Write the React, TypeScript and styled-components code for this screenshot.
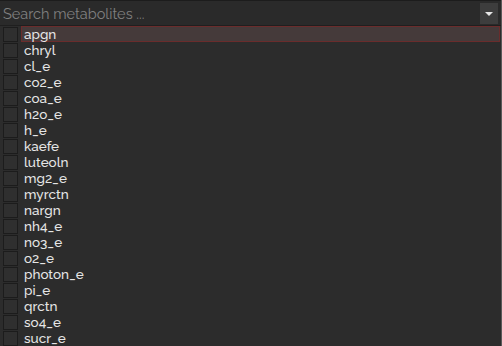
import React from 'react'
import styled, { createGlobalStyle } from 'styled-components'

const GlobalStyle = createGlobalStyle`
html, body {
  margin: 0;
  padding: 0;
  background: #2c2c2c;
  overflow: hidden;
}
`

const metabolites = [
  'apgn', 'chryl', 'cl_e', 'co2_e', 'coa_e', 'h2o_e', 'h_e', 'kaefe', 'luteoln', 'mg2_e',
  'myrctn', 'nargn', 'nh4_e', 'no3_e', 'o2_e', 'photon_e', 'pi_e', 'qrctn', 'so4_e', 'sucr_e',
]

const Panel = styled.div`
width: 502px;
height: 346px;
background: #2c2c2c;
font-family: Raleway, "Open Sans", "Noto Sans", sans-serif;
border-right: 1px solid #5a5a5a;
box-sizing: border-box;
display: flex;
flex-direction: column;
`

const SearchBar = styled.div`
height: 26px;
box-sizing: border-box;
border-top: 1px solid #1c1c1c;
border-bottom: 1px solid #1f1f1f;
background: #2a2a2a;
display: flex;
align-items: center;
padding: 0 3px 0 3px;
`

const SearchInput = styled.input`
flex: 1;
min-width: 0;
background: transparent;
border: none;
outline: none;
color: #ddd;
font-family: inherit;
font-size: 14.5px;
padding: 0;

&::placeholder {
  color: #808080;
}
`

const DropButton = styled.div`
width: 18px;
height: 21px;
background: #3d3d3d;
display: flex;
align-items: center;
justify-content: center;
`

const Triangle = styled.div`
width: 0;
height: 0;
border-left: 4px solid transparent;
border-right: 4px solid transparent;
border-top: 4px solid #e6e6e6;
margin-top: 1px;
`

const List = styled.div`
display: flex;
flex-direction: column;
`

const Row = styled.div`
height: 16px;
display: flex;
align-items: center;
gap: 3px;
padding-left: 3px;
`

const Check = styled.div`
width: 13px;
height: 13px;
flex: none;
border: 1px solid #1c1c1c;
background: #2f2f2f;
`

const Label = styled.div<{ $active?: boolean }>`
flex: 1;
height: 16px;
box-sizing: border-box;
display: flex;
align-items: center;
padding-left: 2px;
font-size: 13.5px;
font-weight: 500;
color: #e6e6e6;
border: 1px solid ${p => (p.$active ? '#6a2c2c' : 'transparent')};
background: ${p => (p.$active ? '#453a3a' : 'transparent')};
margin-right: 1px;
`

export default function App() {
  return (
    <>
      <GlobalStyle />
      <Panel>
        <SearchBar>
          <SearchInput placeholder="Search metabolites ..." />
          <DropButton>
            <Triangle />
          </DropButton>
        </SearchBar>
        <List>
          {metabolites.map((m, i) => (
            <Row key={m}>
              <Check />
              <Label $active={i === 0}>{m}</Label>
            </Row>
          ))}
        </List>
      </Panel>
    </>
  )
}
